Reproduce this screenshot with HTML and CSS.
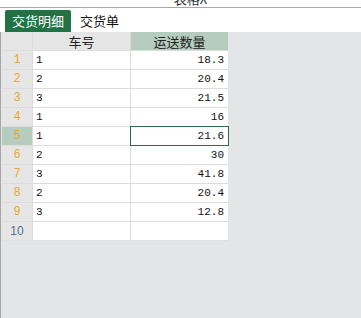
FILE: index.html
```html
<!DOCTYPE html>
<html lang="zh">
<head>
<meta charset="utf-8">
<link rel="stylesheet" href="styles.css">
</head>
<body>
<div class="app">
  <div class="title"><span>表格X</span></div>
  <div class="tabs">
    <div class="tab active">交货明细</div>
    <div class="tab">交货单</div>
  </div>
  <div class="workspace">
    <div class="sheet">
      <div class="corner"></div>
      <div class="colhead">车号</div>
      <div class="colhead sel">运送数量</div>

      <div class="rowhead">1</div><div class="cell">1</div><div class="cell num">18.3</div>
      <div class="rowhead">2</div><div class="cell">2</div><div class="cell num">20.4</div>
      <div class="rowhead">3</div><div class="cell">3</div><div class="cell num">21.5</div>
      <div class="rowhead">4</div><div class="cell">1</div><div class="cell num">16</div>
      <div class="rowhead sel">5</div><div class="cell">1</div><div class="cell num active">21.6</div>
      <div class="rowhead">6</div><div class="cell">2</div><div class="cell num">30</div>
      <div class="rowhead">7</div><div class="cell">3</div><div class="cell num">41.8</div>
      <div class="rowhead">8</div><div class="cell">2</div><div class="cell num">20.4</div>
      <div class="rowhead">9</div><div class="cell">3</div><div class="cell num">12.8</div>
      <div class="rowhead blank">10</div><div class="cell"></div><div class="cell num"></div>
    </div>
  </div>
</div>
</body>
</html>
```

FILE: styles.css
```css
html, body {
  margin: 0;
  padding: 0;
  background: #ffffff;
}
body {
  font-family: "Noto Sans CJK SC", "Liberation Sans", sans-serif;
  font-size: 13px;
  color: #222;
}
.app {
  width: 361px;
  height: 318px;
  display: flex;
  flex-direction: column;
  overflow: hidden;
}
.title {
  height: 7px;
  overflow: hidden;
  text-align: center;
  border-bottom: 1px solid #a8a8a8;
  line-height: 13px;
}
.title span {
  display: block;
  margin-top: -8px;
  padding-left: 20px;
  font-size: 13px;
  color: #333;
}
.tabs {
  display: flex;
  align-items: flex-end;
  height: 24px;
  padding-left: 5px;
  gap: 2px;
  background: #fff;
}
.tab {
  height: 22px;
  line-height: 21px;
  padding: 0 7px;
  font-size: 13px;
  color: #111;
}
.tab.active {
  background: #217346;
  color: #fff;
  border-radius: 2px 2px 0 0;
}
.workspace {
  flex: 1;
  background: #e4e5e7;
  border-left: 1px solid #a6a6a6;
  padding-left: 1px;
}
.sheet {
  display: grid;
  grid-template-columns: 30px 97px 97px;
  grid-auto-rows: 18px;
  gap: 1px;
  background: #dcdcdc;
  width: fit-content;
  border-bottom: 1px solid #e0e0e0;
}
.corner, .colhead, .rowhead {
  background: #e6e6e6;
}
.colhead {
  text-align: center;
  line-height: 19px;
  font-size: 13px;
  color: #222;
}
.colhead.sel, .rowhead.sel {
  background: #b5ccbe;
}
.rowhead {
  text-align: center;
  line-height: 18px;
  font-family: "Liberation Mono", "DejaVu Sans Mono", monospace;
  font-size: 12px;
  color: #efa52f;
}
.rowhead.blank {
  color: #56718e;
  font-family: "Liberation Sans", sans-serif;
}
.cell {
  background: #fff;
  line-height: 18px;
  padding: 0 3px;
  font-family: "Liberation Mono", "DejaVu Sans Mono", monospace;
  font-size: 11px;
  color: #111;
}
.cell.num {
  text-align: right;
  padding-right: 4px;
}
.cell.active {
  outline: 1px solid #2f6b4a;
  outline-offset: 0;
  position: relative;
}
```
